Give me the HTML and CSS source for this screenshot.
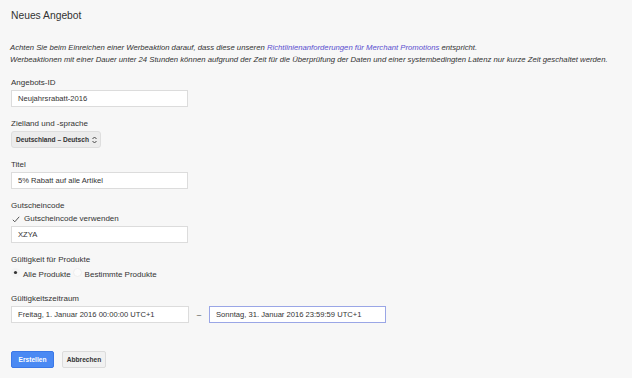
FILE: index.html
```html
<!DOCTYPE html>
<html lang="de">
<head>
<meta charset="utf-8">
<link rel="stylesheet" href="styles.css">
</head>
<body>
<div class="page">
  <h1 class="title">Neues Angebot</h1>
  <div class="notice">
    <p>Achten Sie beim Einreichen einer Werbeaktion darauf, dass diese unseren <a class="link" href="#">Richtlinienanforderungen für Merchant Promotions</a> entspricht.</p>
    <p>Werbeaktionen mit einer Dauer unter 24 Stunden können aufgrund der Zeit für die Überprüfung der Daten und einer systembedingten Latenz nur kurze Zeit geschaltet werden.</p>
  </div>

  <div class="field">
    <div class="label">Angebots-ID</div>
    <div class="input">Neujahrsrabatt-2016</div>
  </div>

  <div class="field">
    <div class="label">Zielland und -sprache</div>
    <div class="select">Deutschland – Deutsch <span class="arrows"><svg width="5" height="8" viewBox="0 0 5 8"><path d="M0.5 3 L2.5 1 L4.5 3 M0.5 5 L2.5 7 L4.5 5" fill="none" stroke="#444" stroke-width="1"/></svg></span></div>
  </div>

  <div class="field">
    <div class="label">Titel</div>
    <div class="input">5% Rabatt auf alle Artikel</div>
  </div>

  <div class="field">
    <div class="label">Gutscheincode</div>
    <div class="check"><span class="tick"><svg width="8" height="7" viewBox="0 0 8 7"><path d="M0.8 3.8 L2.8 5.8 L7.2 0.8" fill="none" stroke="#555" stroke-width="1"/></svg></span>Gutscheincode verwenden</div>
    <div class="input">XZYA</div>
  </div>

  <div class="field">
    <div class="label">Gültigkeit für Produkte</div>
    <div class="radios">
      <span class="radio on"><svg width="9" height="9" viewBox="0 0 9 9"><circle cx="4.5" cy="4.5" r="1.6" fill="#333"/></svg></span><span class="rlabel">Alle Produkte</span>
      <span class="radio"></span><span class="rlabel">Bestimmte Produkte</span>
    </div>
  </div>

  <div class="field">
    <div class="label">Gültigkeitszeitraum</div>
    <div class="range">
      <div class="input">Freitag, 1. Januar 2016 00:00:00 UTC+1</div>
      <span class="dash">–</span>
      <div class="input focus">Sonntag, 31. Januar 2016 23:59:59 UTC+1</div>
    </div>
  </div>

  <div class="buttons">
    <button class="btn primary">Erstellen</button>
    <button class="btn">Abbrechen</button>
  </div>
</div>
</body>
</html>
```

FILE: styles.css
```css
html, body {
  margin: 0;
  padding: 0;
  background: #f7f7f7;
}
body {
  font-family: "Liberation Sans", Arial, sans-serif;
  color: #333;
  width: 632px;
  height: 378px;
  overflow: hidden;
}
.page {
  padding: 9px 0 0 11px;
}
.title {
  margin: 0;
  font-size: 10.3px;
  font-weight: normal;
  line-height: 14px;
  color: #333;
}
.notice {
  margin-top: 19px;
  margin-left: -1px;
  font-size: 7.72px;
  font-style: italic;
  line-height: 12px;
  color: #333;
}
.notice p {
  margin: 0;
}
.link {
  color: #5a4fcf;
  text-decoration: none;
}
.field {
  margin-top: 11px;
}
.label {
  font-size: 8px;
  line-height: 12px;
  color: #333;
  margin-bottom: 1px;
}
.input {
  box-sizing: border-box;
  width: 177px;
  height: 17px;
  background: #fff;
  border: 1px solid #dcdcdc;
  font-size: 7.6px;
  line-height: 15px;
  padding-left: 6px;
  color: #333;
  white-space: nowrap;
}
.input.focus {
  border-color: #9aa6e6;
}
.select {
  box-sizing: border-box;
  display: flex;
  width: fit-content;
  align-items: center;
  height: 17px;
  padding: 0 3px 0 4px;
  background: #ececec;
  border: 1px solid #dedede;
  border-radius: 3px;
  font-size: 6.6px;
  font-weight: bold;
  color: #333;
  gap: 3px;
}
.arrows {
  display: flex;
  align-items: center;
}
.check {
  font-size: 8px;
  line-height: 12px;
  display: flex;
  align-items: center;
  margin-bottom: 1px;
}
.tick {
  display: flex;
  width: 12px;
  padding-left: 1px;
}
.radios {
  display: flex;
  align-items: center;
  height: 15px;
  font-size: 8px;
}
.radio {
  box-sizing: border-box;
  display: flex;
  width: 9px;
  height: 9px;
  border-radius: 50%;
  border: 1px solid #eeeeee;
  background: #fbfbfb;
  margin-right: 3px;
  position: relative;
  top: -2px;
}
.radio.on {
  border: none;
  background: #f3f3f3;
}
.rlabel {
  padding-right: 2px;
}
.rlabel:first-of-type {
  margin-left: 1px;
}
.range {
  display: flex;
  align-items: center;
}
.range .input:first-child {
  width: 178px;
}
.dash {
  width: 20px;
  text-align: center;
  font-size: 8px;
}
.buttons {
  margin-top: 28px;
  display: flex;
  gap: 8px;
}
.btn {
  box-sizing: border-box;
  height: 17px;
  width: 44px;
  padding: 0;
  font-family: "Liberation Sans", Arial, sans-serif;
  font-size: 6.6px;
  font-weight: bold;
  border-radius: 2px;
  border: 1px solid #dcdcdc;
  background: #f1f1f1;
  color: #333;
}
.btn.primary {
  background: #4a89f3;
  border-color: #3b78e7;
  color: #fff;
  width: 43px;
}
```
